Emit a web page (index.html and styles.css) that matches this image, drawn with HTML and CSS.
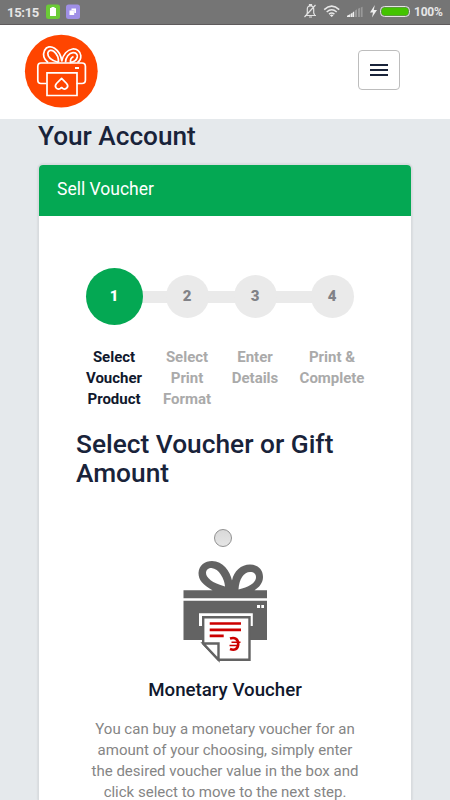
FILE: index.html
```html
<!DOCTYPE html>
<html lang="en">
<head>
<meta charset="utf-8">
<title>Your Account</title>
<link rel="stylesheet" href="styles.css">
</head>
<body>
<div class="statusbar">
  <span class="clock">15:15</span>
  <svg class="apps" width="36" height="16" viewBox="45 5 36 16">
    <rect x="46" y="5.500" width="14" height="14.500" rx="2.500" fill="#6bcb36"/>
    <path d="M50 9h1.500V8h3v1H56v8h-6z" fill="#fff"/>
    <rect x="66" y="5.500" width="14" height="14.500" rx="2.500" fill="#9f8fe6"/>
    <path d="M71.500 9.500H76v4.500h-1.800v2H69.500v-4.500h2z" fill="#fff"/>
    <path d="M71.500 11.500h2.700v2.500" fill="none" stroke="#d8d0fa" stroke-width=".7"/>
  </svg>
  <svg class="system" width="108" height="18" viewBox="302 4 108 18" fill="none">
    <g stroke="#e2e2e2" stroke-width="1.200">
      <path d="M305 16.500h11M306.500 16l.8-2V10c0-2 1.200-3.200 3.200-3.200s3.200 1.200 3.200 3.200v4l1 2M309.500 6.500v-.8h2v.8M309 18h3M304.500 18L315.500 6"/>
    </g>
    <g stroke="#e8e8e8" stroke-width="1.500">
      <path d="M324.200 10.600Q331.700 3.700 339.200 10.600M326.700 13Q331.700 8.500 336.700 13M329 15.200Q331.700 13 334.400 15.200"/>
    </g>
    <path d="M331.700 18l-1.800-1.800q1.800-1.300 3.600 0z" fill="#eee"/>
    <path d="M347 18v-1.200l3-1.500V18zM350.500 18v-3l2.200-1.400V18z" fill="#eee"/>
    <path d="M353 18v-5l1.200-.6V18z" fill="#eee"/>
    <path d="M355 18v-6.500l2-1.200V18zM358 18V9.800l2-1V18zM360.800 18V8.600l1.800-.8V18z" fill="#999"/>
    <path d="M374.800 6l-4.800 7.500h3l-1 5 5-7.500h-3.200z" fill="#eee"/>
    <rect x="380.500" y="7.500" width="29" height="10" rx="4" stroke="#e4e4e4"/>
    <rect x="381.500" y="8.500" width="27" height="8" rx="3.500" fill="#43c300"/>
  </svg>
  <span class="percent">100%</span>
</div>
<header class="topbar">
  <svg class="logo" width="74" height="74" viewBox="24 34 74 74" fill="none">
    <circle cx="61.300" cy="71.200" r="36.400" fill="#ff4500"/>
    <g stroke="#fff" stroke-width="1.700" stroke-linejoin="round">
      <path d="M48 62.500C43 58.500 43 54 44.500 50.500C46.500 46.500 51 45.800 54.500 48.200C58 50.500 61 55 61.800 61C63 55 67 50 72.500 49C77 48.500 80.500 51.500 80.800 55.500C81 58.500 79.800 61 77.500 62.500"/>
      <path d="M58.500 62.500C52 60.500 47.500 57 47.800 53.200C48.300 50 51.500 49.500 54 51.500C57 54 58.800 58 58.500 62.500"/>
      <path d="M65.500 62.500C65.500 57.500 69 53 73 52.600C76 52.500 77.800 54.500 77.300 57C76.500 60.500 73.500 62 70.500 62.500C70 59.500 71.500 57.500 73.500 56.500"/>
      <path d="M46.500 83.500H41q-3.200 0-3.200-3.500V66.500q0-3.500 3.200-3.500h41q3.400 0 3.400 3.500V80q0 3.500-3.400 3.500h-5.500"/>
      <path d="M47 72.800h30v22.700H47z" stroke-linejoin="miter"/>
      <path d="M61.600 78.300l5 5.200c3 3.500-1 6.700-3.700 5l-1.300-1-1.300 1c-3 1.700-6.700-1.500-3.800-5z"/>
    </g>
    <path d="M75 67h4v2h-4z" fill="#fff"/>
  </svg>
  <button class="menu" aria-label="Menu"><i></i><i></i><i></i></button>
</header>
<main class="page">
  <h1>Your Account</h1>
  <section class="card">
    <div class="card-head">Sell Voucher</div>
    <div class="card-body">
      <ol class="steps">
        <li class="active"><b class="dot">1</b><span>Select<br>Voucher<br>Product</span></li>
        <li><b class="dot">2</b><span>Select<br>Print<br>Format</span></li>
        <li><b class="dot">3</b><span>Enter<br>Details</span></li>
        <li><b class="dot">4</b><span>Print &amp;<br>Complete</span></li>
      </ol>
      <h2>Select Voucher or Gift Amount</h2>
      <div class="option">
        <span class="radio"></span>
        <svg class="gift" width="86" height="104" viewBox="182 559 86 104">
          <path d="M183.500 590.200h29C203 585 198.500 580 198.500 573C199 565 205 561 212 561C223 561 230 571 232 580.500C234 571 241 564.500 250 564.500C257 564.500 263 569 263 577C263 583 259 587.500 254.500 590.200H267v8H183.500z" fill="#636363"/>
          <path d="M225 586.500C212 583 206 577.500 206 573C206 569.500 208.500 568 211.500 568C219 568.500 224.500 579 225 586.500z" fill="#fff"/>
          <path d="M238.500 589.500C239 579 244 572 250 572C254 572 256 574 256 577C256 583.500 248 587 238.500 589.500z" fill="#fff"/>
          <path d="M183.500 600.700H267V640H183.500z" fill="#636363"/>
          <path d="M257 605h3v3h-3zM261.300 605h2.700v3h-2.700z" fill="#fff"/>
          <path d="M199 626v-12.700h53.800V626h-3v-9H202v9z" fill="#fff"/>
          <path d="M203.200 617.200h46.300v42.600h-31L203.200 643.500z" fill="#fff" stroke="#636363" stroke-width="2.400"/>
          <path d="M203.200 643.500h15.300v16.300z" fill="#fff" stroke="#636363" stroke-width="2.400"/>
          <path d="M209.700 622.300H241v2.500h-31.300zM209.700 628.500H241v2.700h-31.300zM209.700 634.500h14v2.700h-14z" fill="#c00"/>
          <path d="M230 638.500c5-1.500 8.200.5 8.200 5.500s-3.700 6.800-8.200 5" fill="none" stroke="#c00" stroke-width="2.600"/>
          <path d="M231.500 642.300h9M229.500 645.500h9.500" fill="none" stroke="#c00" stroke-width="1.500"/>
        </svg>
        <h3>Monetary Voucher</h3>
        <p>You can buy a monetary voucher for an<br>amount of your choosing, simply enter<br>the desired voucher value in the box and<br>click select to move to the next step.</p>
      </div>
    </div>
  </section>
</main>
</body>
</html>
```

FILE: styles.css
```css
* { box-sizing: border-box; }
body {
  margin: 0;
  display: flex;
  flex-direction: column;
  height: 800px;
  overflow: hidden;
  background: #e5e9ec;
  color: #19233a;
  font-family: Roboto, "Liberation Sans", sans-serif;
}
h1, h2, h3, p, ol { margin: 0; padding: 0; }
.statusbar {
  display: flex;
  flex: none;
  align-items: center;
  height: 25px;
  padding: 0 8px 0 7px;
  background: #757575;
  border-bottom: 1px solid #5e5a5c;
  color: #e6e6e6;
  font-size: 13px;
  font-weight: 500;
}
.clock { width: 38px; letter-spacing: -.3px; font-weight: 700; }
.system { margin-left: auto; }
.percent { width: 28px; margin-left: 4px; font-size: 12px; letter-spacing: -.2px; font-weight: 700; white-space: nowrap; }
.topbar {
  display: flex;
  flex: none;
  justify-content: space-between;
  align-items: flex-start;
  height: 94px;
  padding: 9px 50px 0 24px;
  background: #fff;
}
.menu {
  display: flex;
  flex-direction: column;
  align-items: center;
  justify-content: center;
  gap: 3px;
  width: 42px;
  height: 40px;
  margin-top: 16px;
  padding: 0;
  border: 1px solid #bdbdbd;
  border-radius: 4px;
  background: #fff;
}
.menu i { width: 18px; height: 2px; background: #19233a; }
.page {
  display: flex;
  flex: 1;
  flex-direction: column;
  min-height: 0;
  padding: 2px 38px 0;
}
h1 { font-size: 26.2px; line-height: 30px; font-weight: 500; }
.card {
  flex: 1;
  min-height: 0;
  margin-top: 13px;
  border: 1px solid #d8dcdf;
  border-bottom: 0;
  border-radius: 5px 5px 0 0;
  background: #fff;
  box-shadow: 0 0 2px rgba(0, 0, 0, .16);
  overflow: hidden;
}
.card-head {
  height: 51px;
  padding-left: 18px;
  background: #04a853;
  color: #fff;
  font-size: 17.5px;
  line-height: 48px;
}
.card-body { padding: 52px 34px 0 38px; }
.steps {
  display: grid;
  grid-template-columns: 74px 72px 64px 90px;
  height: 157px;
  list-style: none;
  background: linear-gradient(#eaeaea, #eaeaea) 40px 23px / 200px 12px no-repeat;
}
.steps li {
  display: flex;
  flex-direction: column;
  align-items: center;
  color: #aaa;
  font-size: 15px;
  line-height: 21px;
  font-weight: 700;
  text-align: center;
}
.steps span { letter-spacing: -.02px; }
.steps .active { color: #10182d; }
.dot {
  width: 43px;
  height: 43px;
  margin: 7px 0 29px;
  border-radius: 50%;
  background: #eaeaea;
  color: #818287;
  line-height: 43px;
}
.active .dot {
  width: 57px;
  height: 57px;
  margin: 0 0 22px;
  background: #04a853;
  color: #fff;
  line-height: 57px;
}
h2 {
  margin: 5px 0 0 -1px;
  font-size: 26.3px;
  line-height: 29px;
  font-weight: 500;
}
.option {
  display: flex;
  flex-direction: column;
  align-items: center;
  width: 296px;
  padding-top: 41px;
  text-align: center;
}
.radio {
  width: 18px;
  height: 18px;
  margin-right: 5px;
  border: 1px solid #919191;
  border-radius: 50%;
  background: linear-gradient(#d9d9d9, #e5e5e5);
}
.gift { margin-top: 12px; }
h3 {
  margin-top: 15px;
  color: #10182d;
  font-size: 18.7px;
  line-height: 24px;
  font-weight: 500;
  white-space: nowrap;
}
p { margin-top: 17px; color: #858585; font-size: 15px; line-height: 21px; white-space: nowrap; }
```
